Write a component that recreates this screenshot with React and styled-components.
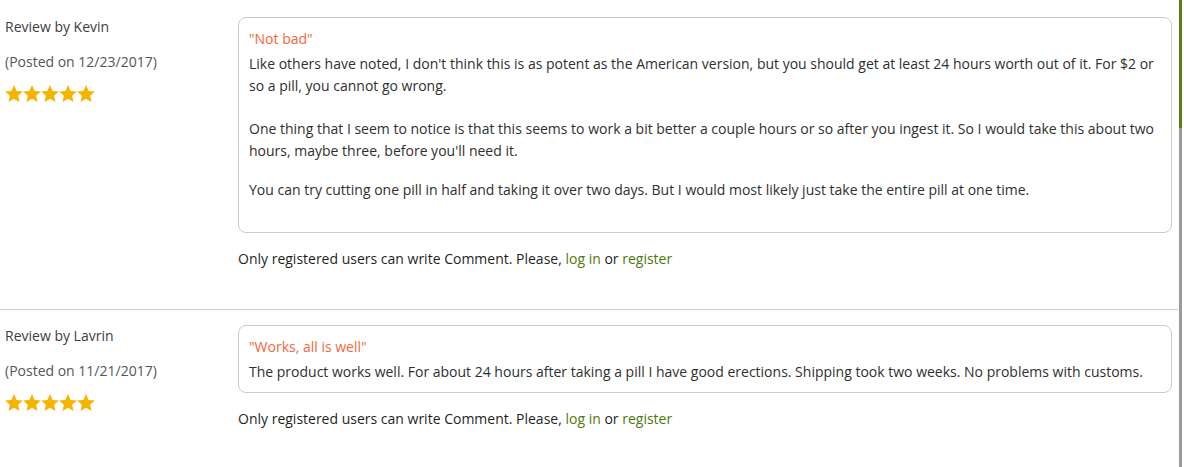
import React from "react";
import styled, { createGlobalStyle } from "styled-components";

const GlobalStyle = createGlobalStyle`
  html, body {
    margin: 0;
    padding: 0;
    background: #fff;
  }
  body {
    font-family: "Open Sans", "Noto Sans", sans-serif;
    font-size: 14px;
    color: #333;
  }
`;

const Page = styled.div`
  display: flex;
  height: 467px;
  overflow: hidden;
`;

const Content = styled.div`
  flex: 1;
`;

const ScrollTrack = styled.div`
  width: 3px;
  margin: 0 2px 0 1px;
  background: #9a9a9a;
  display: flex;
  flex-direction: column;
`;

const ScrollThumb = styled.div`
  height: 128px;
  background: #5b7d12;
`;

const ReviewRow = styled.section`
  display: grid;
  grid-template-columns: 233px 1fr;
  padding: ${(p) => (p.$first ? 16 : 15)}px 6px 39px 5px;
  border-bottom: ${(p) => (p.$last ? "none" : "1px solid #cfcfcf")};
`;

const Author = styled.div`
  display: flex;
  flex-direction: column;
  line-height: 22px;
`;

const Name = styled.div`
  color: #3d3d3d;
`;

const Posted = styled.div`
  color: #555;
  margin-top: 13px;
`;

const Stars = styled.div`
  display: flex;
  margin-top: 12px;
`;

const Main = styled.div`
  display: flex;
  flex-direction: column;
  padding-top: ${(p) => (p.$first ? 1 : 0)}px;
`;

const Card = styled.div`
  border: 1px solid #cccccc;
  border-radius: 8px;
  padding: 10px 10px 9px;
  line-height: 22px;
`;

const Title = styled.div`
  color: #f2683a;
  margin-bottom: 3px;
`;

const Para = styled.p`
  margin: 0 0 ${(p) => p.$gap || 0}px;
  color: #2f2f2f;
`;

const Notice = styled.div`
  margin-top: 15px;
  line-height: 22px;
  color: #1f1f1f;
`;

const GreenLink = styled.a`
  color: #4e7a0c;
  text-decoration: none;
`;

const Star = () => (
  <svg width="18" height="17" viewBox="0 0 24 23">
    <polygon
      points="12,0 15.5,8.2 24,8.8 17.6,14.4 19.4,23 12,18.6 4.6,23 6.4,14.4 0,8.8 8.5,8.2"
      fill="#f5b400"
    />
  </svg>
);

const reviews = [
  {
    name: "Kevin",
    date: "12/23/2017",
    title: "\"Not bad\"",
    paras: [
      "Like others have noted, I don't think this is as potent as the American version, but you should get at least 24 hours worth out of it. For $2 or so a pill, you cannot go wrong.",
      "One thing that I seem to notice is that this seems to work a bit better a couple hours or so after you ingest it. So I would take this about two hours, maybe three, before you'll need it.",
      "You can try cutting one pill in half and taking it over two days. But I would most likely just take the entire pill at one time.",
    ],
    gaps: [21, 17, 22],
  },
  {
    name: "Lavrin",
    date: "11/21/2017",
    title: "\"Works, all is well\"",
    paras: [
      "The product works well. For about 24 hours after taking a pill I have good erections. Shipping took two weeks. No problems with customs.",
    ],
    gaps: [0],
  },
];

const App = () => {
  return (
    <>
      <GlobalStyle />
      <Page>
        <Content>
          {reviews.map((r, i) => (
            <ReviewRow
              key={r.name}
              $first={i === 0}
              $last={i === reviews.length - 1}
            >
              <Author>
                <Name>Review by {r.name}</Name>
                <Posted>(Posted on {r.date})</Posted>
                <Stars>
                  {[0, 1, 2, 3, 4].map((s) => (
                    <Star key={s} />
                  ))}
                </Stars>
              </Author>
              <Main $first={i === 0}>
                <Card>
                  <Title>{r.title}</Title>
                  {r.paras.map((t, j) => (
                    <Para key={j} $gap={r.gaps[j]}>
                      {t}
                    </Para>
                  ))}
                </Card>
                <Notice>
                  Only registered users can write Comment. Please,{" "}
                  <GreenLink href="#">log in</GreenLink> or{" "}
                  <GreenLink href="#">register</GreenLink>
                </Notice>
              </Main>
            </ReviewRow>
          ))}
        </Content>
        <ScrollTrack>
          <ScrollThumb />
        </ScrollTrack>
      </Page>
    </>
  );
};

export default App;
